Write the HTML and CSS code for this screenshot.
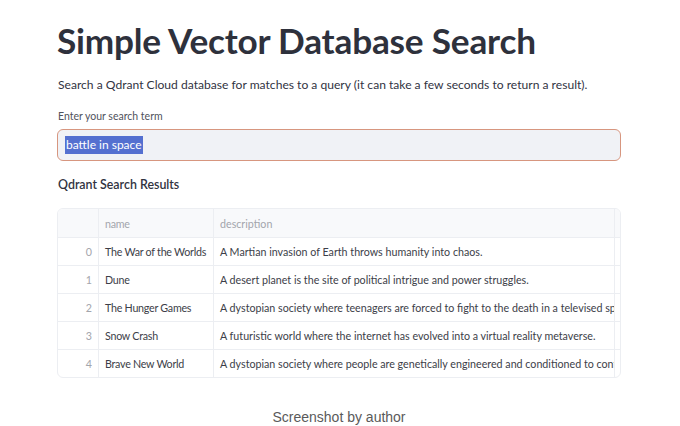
FILE: index.html
```html
<!DOCTYPE html>
<html>
<head>
<meta charset="utf-8">
<link rel="stylesheet" href="styles.css">
</head>
<body>
<main class="page">
  <h1 class="title">Simple Vector Database Search</h1>
  <p class="intro">Search a Qdrant Cloud database for matches to a query (it can take a few seconds to return a result).</p>
  <label class="field-label">Enter your search term</label>
  <div class="input"><span class="selected">battle in space</span></div>
  <h3 class="section">Qdrant Search Results</h3>
  <div class="table">
    <div class="row head">
      <div class="cell idx"></div>
      <div class="cell name">name</div>
      <div class="cell desc">description</div>
      <div class="cell edge"></div>
    </div>
    <div class="row">
      <div class="cell idx">0</div>
      <div class="cell name">The War of the Worlds</div>
      <div class="cell desc">A Martian invasion of Earth throws humanity into chaos.</div>
      <div class="cell edge"></div>
    </div>
    <div class="row">
      <div class="cell idx">1</div>
      <div class="cell name">Dune</div>
      <div class="cell desc">A desert planet is the site of political intrigue and power struggles.</div>
      <div class="cell edge"></div>
    </div>
    <div class="row">
      <div class="cell idx">2</div>
      <div class="cell name">The Hunger Games</div>
      <div class="cell desc">A dystopian society where teenagers are forced to fight to the death in a televised spectacle.</div>
      <div class="cell edge"></div>
    </div>
    <div class="row">
      <div class="cell idx">3</div>
      <div class="cell name">Snow Crash</div>
      <div class="cell desc">A futuristic world where the internet has evolved into a virtual reality metaverse.</div>
      <div class="cell edge"></div>
    </div>
    <div class="row last">
      <div class="cell idx">4</div>
      <div class="cell name">Brave New World</div>
      <div class="cell desc">A dystopian society where people are genetically engineered and conditioned to conform.</div>
      <div class="cell edge"></div>
    </div>
  </div>
  <p class="caption">Screenshot by author</p>
</main>
</body>
</html>
```
FILE: styles.css
```css
html, body {
  margin: 0;
  padding: 0;
  background: #ffffff;
}
body {
  font-family: Lato, "Noto Sans", sans-serif;
  color: #31333f;
}
.page {
  width: 564px;
  padding: 20px 0 0 57px;
}
.title {
  margin: 0;
  font-size: 35.2px;
  line-height: 40px;
  font-weight: 700;
  color: #2e313c;
  letter-spacing: -0.2px;
}
.intro {
  margin: 16px 0 0 1px;
  font-size: 12.1px;
  line-height: 18px;
}
.field-label {
  display: block;
  margin: 15px 0 0 1px;
  font-size: 10.5px;
  line-height: 14px;
  color: #50525c;
}
.input {
  margin-top: 6px;
  height: 32px;
  box-sizing: border-box;
  border: 1px solid #d7967f;
  border-radius: 6px;
  background: #f0f2f6;
  display: flex;
  align-items: center;
  padding-left: 7px;
}
.selected {
  background: #5470d0;
  color: #ffffff;
  font-size: 12px;
  line-height: 18px;
  padding: 0 1px;
}
.section {
  margin: 16px 0 0 1px;
  font-size: 12.4px;
  line-height: 16px;
  font-weight: 600;
  color: #31333f;
}
.table {
  margin-top: 15px;
  border: 1px solid #eceef2;
  border-radius: 6px;
  overflow: hidden;
  font-size: 10.7px;
}
.row {
  display: flex;
  height: 28px;
  box-sizing: border-box;
  border-bottom: 1px solid #eceef2;
}
.row.head {
  height: 29px;
  background: #f8f9fb;
}
.row.last {
  border-bottom: none;
  height: 27px;
}
.cell {
  display: flex;
  align-items: center;
  padding: 0 6px;
  white-space: nowrap;
  overflow: hidden;
  box-sizing: border-box;
  border-right: 1px solid #eceef2;
  color: #3c3e48;
}
.head .cell {
  color: #a3a5ac;
}
.idx {
  width: 41px;
  justify-content: flex-end;
  color: #a3a5ac;
}
.name {
  width: 115px;
  letter-spacing: -0.25px;
}
.desc {
  width: 401px;
  padding-right: 0;
}
.edge {
  flex: 1;
  border-right: none;
  padding: 0;
}
.caption {
  margin: 31px 0 0 0;
  text-align: center;
  font-size: 14px;
  line-height: 16px;
  color: #5a5a5a;
  font-family: "Liberation Sans", sans-serif;
}
```
